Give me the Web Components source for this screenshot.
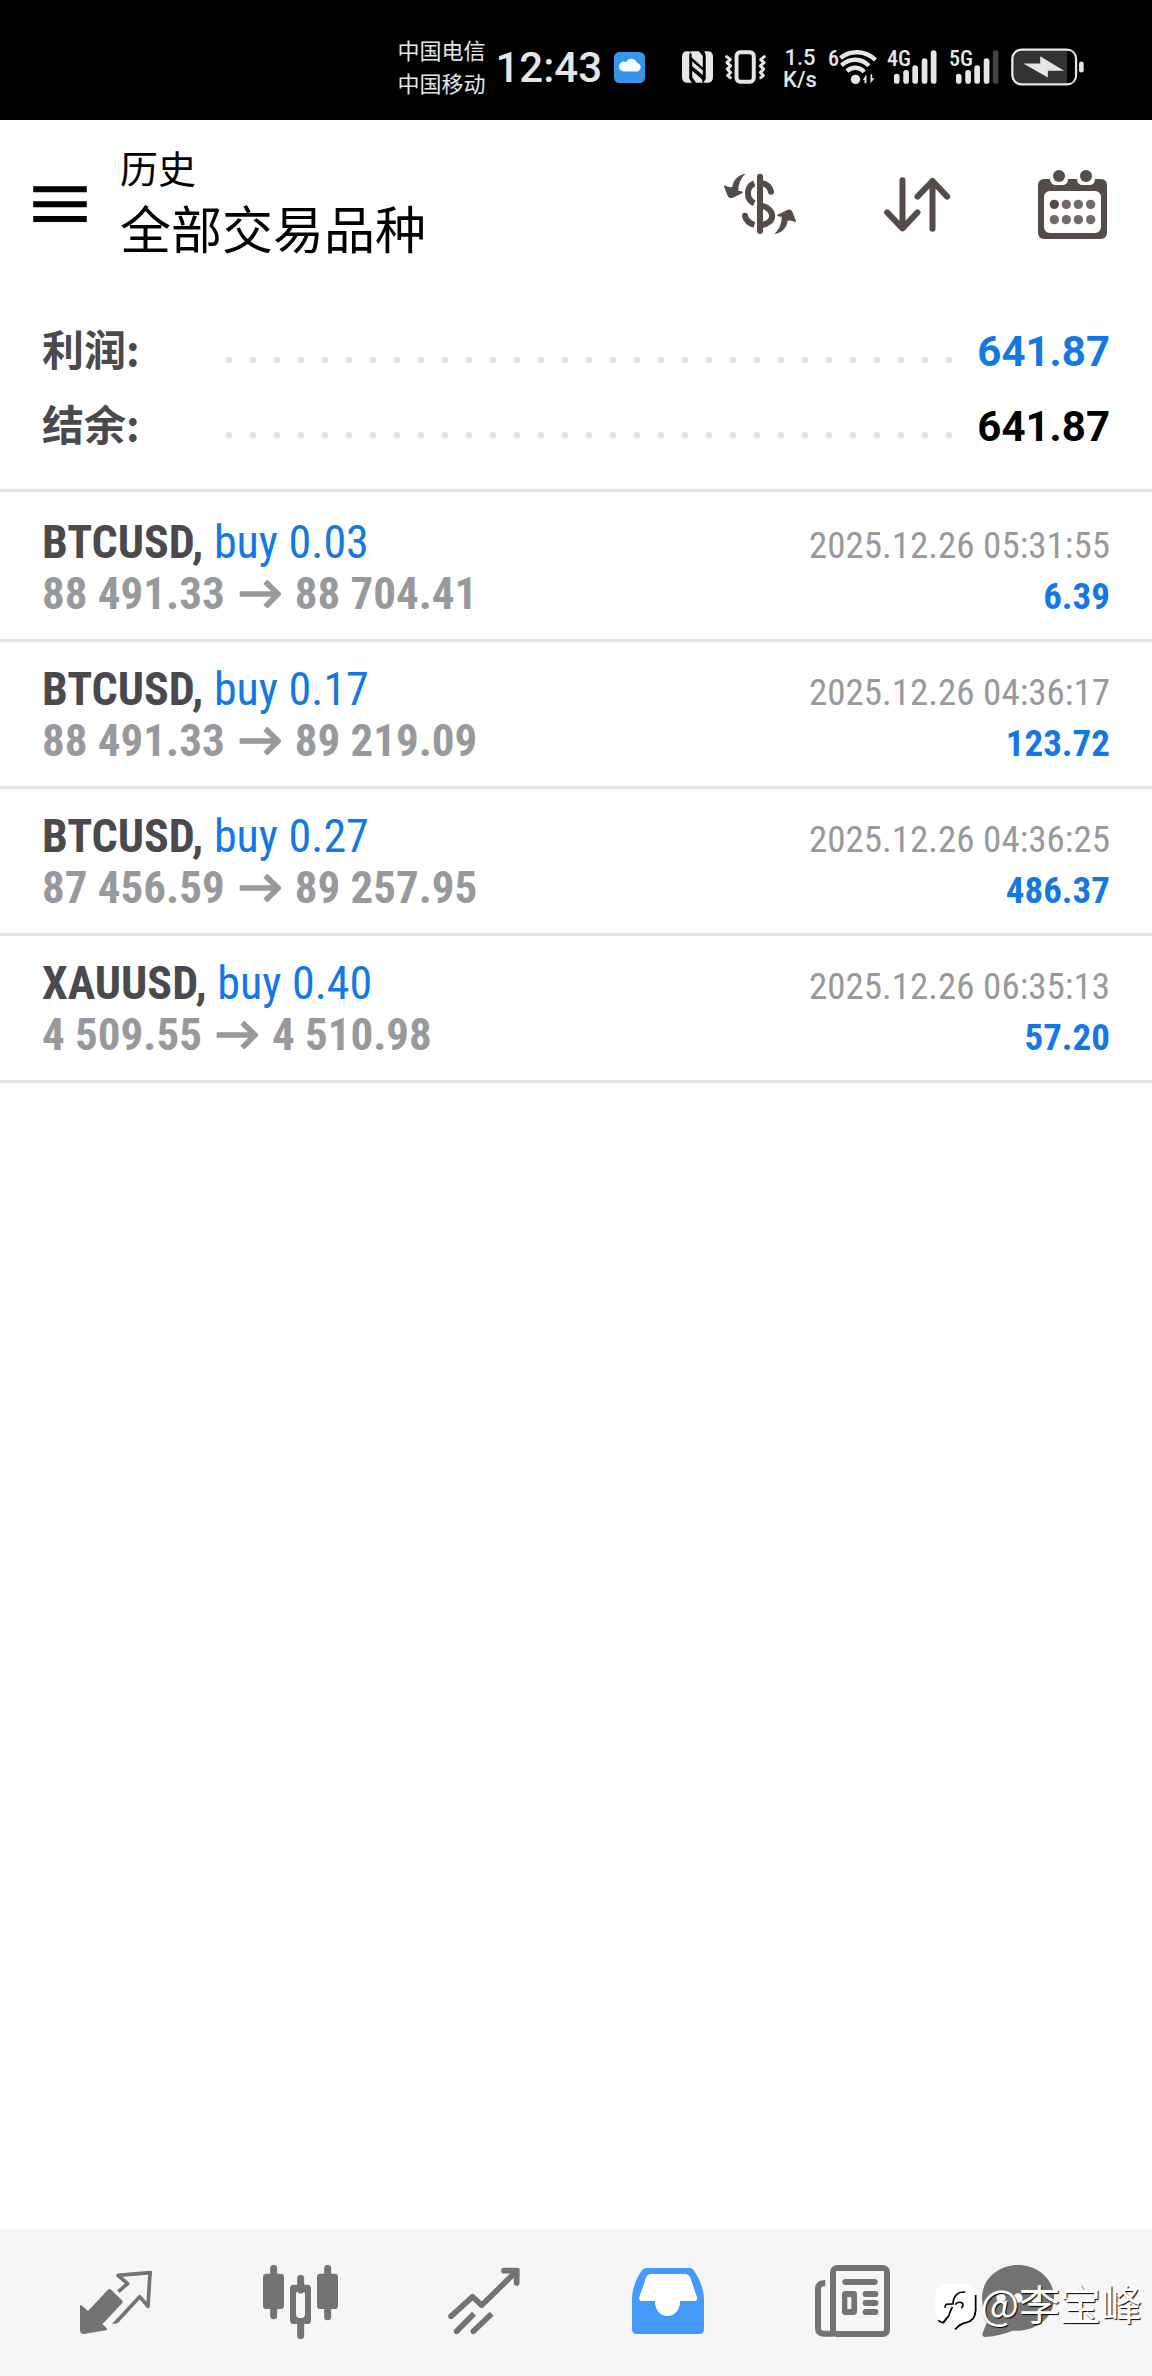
<!DOCTYPE html>
<html lang="zh-CN">
<head>
<meta charset="utf-8">
<meta name="viewport" content="width=device-width">
<title>历史</title>
<style>
html{height:100%}
body{margin:0;min-height:100%;background:#fff;font-family:Roboto,"Noto Sans CJK SC",sans-serif;color:#000;
--narrow:"Roboto Condensed","Liberation Sans Narrow",Roboto,sans-serif;--cjk:"Noto Sans CJK SC",sans-serif;
--blue:#1478e4;--ink:#4a494e;--muted:#98999c;--line:#e3e3e3}
</style>
</head>
<body>
<trade-app></trade-app>
<script>
const define=(name,html,setup)=>customElements.define(name,class extends HTMLElement{
  connectedCallback(){
    if(this.shadowRoot)return;
    this.attachShadow({mode:'open'}).innerHTML=typeof html==='function'?html(this):html;
    if(setup)setup(this);
  }
});
// Icon geometry is drawn on a grid three times finer than its display size.
const ICONS={
cloud:['701 98 94 94','<rect x="701" y="98" width="94" height="94" rx="16" fill="#3596ea"/><path d="M731 157a15 15 0 0 1 0-30q5 0 7 1a18 18 0 0 1 33 3 13 13 0 0 1-4 26z" fill="#f4fbff"/>'],
nfc:['65 95 94 95','<path d="M91 95H80Q65 95 65 112V172Q65 190 80 190H95L87 178V106zM86 95L116 95L128 109V144L94 113V103zM133 95H144Q159 95 159 112V172Q159 190 144 190H130L137 178V108zM96 126L128 153V167L96 140zM96 154L124 178L128 190H108L96 174z"/>'],
vibrate:['193 92 130 101','<rect x="231" y="98" width="52" height="89" rx="11" fill="none" stroke="currentColor" stroke-width="12"/><path d="M201 111l11 9-10 9 11 10-10 10 10 10-9 9 8 7M315 111l-11 9 10 9-11 10 10 10-10 10 9 9-8 7" fill="none" stroke="currentColor" stroke-width="9" stroke-linejoin="round" stroke-linecap="round"/>'],
wifi:['537 92 116 102','<circle cx="586" cy="180" r="14"/><path d="M541 116C570 92 615 92 646 122M544 138C570 114 605 117 626 139M560 155C576 141 599 142 612 158" fill="none" stroke="currentColor" stroke-width="13"/><path d="M608 182l11-17v27h-6v-10zM643 177l-12 15v-27h5v12z"/>'],
bars:['703 92 128 101','<g stroke="currentColor" stroke-width="17" stroke-linecap="round"><path d="M711 171V184M739 160V184M766 146V184M794 125V184"/><path class="last" d="M821 101V184"/></g>'],
battery:['1053 86 220 113','<rect x="1057" y="90" width="192" height="105" rx="28" fill="#333" stroke="currentColor" stroke-width="7"/><path d="M1222 94V191H1228Q1244 188 1245 170V116Q1244 97 1228 94z" fill="#000"/><path d="M1090 132H1141V110L1213 154H1164V174z"/><rect x="1258" y="126" width="14" height="33" rx="7"/>'],
menu:['99 197 162 109','<path d="M99 198h162v18H99zM99 243h162v18H99zM99 288h162v18H99z"/>'],
exchange:['105 99 222 186','<path d="M216 110V273" stroke="currentColor" stroke-width="18" stroke-linecap="round"/><g fill="none" stroke="currentColor" stroke-width="18"><path d="M199 130C174 141 173 178 199 190M216 128C235 130 245 139 249 155M216 195C266 207 263 251 216 256M171 228C174 241 184 250 199 255"/></g><circle cx="249" cy="155" r="9"/><circle cx="171" cy="227" r="9"/><path d="M171 101C148 106 135 122 133 141Q120 143 109 136Q106 138 110 145L119 168Q124 177 134 173L164 159Q166 155 160 154L151 152C151 132 159 115 171 103z"/><path d="M261 282C284 277 297 261 299 242Q312 240 323 247Q326 245 322 238L313 215Q308 206 298 210L268 224Q266 228 272 229L281 231C281 251 273 268 261 280z"/>'],
sort:['584 109 200 165','<path d="M639 119V262M593 215L639 263L684 215M729 264V121M684 168L729 121L773 168" fill="none" stroke="currentColor" stroke-width="18" stroke-linecap="round" stroke-linejoin="round"/>'],
calendar:['1044 84 207 207','<path fill-rule="evenodd" d="M1062 111H1080Q1082 129 1098 129H1116Q1134 129 1134 111H1161Q1162 129 1178 129H1197Q1214 129 1215 111H1233Q1251 113 1251 129V273Q1250 290 1233 291H1062Q1045 290 1044 273V129Q1045 112 1062 111zM1080 147Q1063 148 1062 165V255Q1063 272 1080 273H1215Q1232 272 1233 255V165Q1232 148 1215 147z"/><circle cx="1107" cy="102" r="18"/><circle cx="1188" cy="102" r="18"/><circle cx="1093" cy="187" r="14"/><g opacity=".82"><circle cx="1129" cy="187" r="14"/><circle cx="1165" cy="187" r="14"/><circle cx="1202" cy="187" r="14"/><circle cx="1093" cy="233" r="14"/><circle cx="1129" cy="233" r="14"/><circle cx="1165" cy="233" r="14"/><circle cx="1202" cy="233" r="14"/></g>'],
arrow:['714 233 126 84','<path d="M716 275H830M793 238L831 275L793 313" fill="none" stroke="currentColor" stroke-width="17"/>'],
quotes:['120 165 216 222','<path d="M120 287Q122 283 126 287L144 303L203 240Q208 234 214 240L246 271Q250 276 245 281L187 343L200 354Q203 359 198 361L132 372Q120 372 120 361z"/><path d="M235 245L263 221L234 196L330 188L324 289L299 260L229 336" fill="none" stroke="currentColor" stroke-width="11" stroke-linejoin="round"/><path d="M216 341H228L242 328L232 325z"/><path d="M320 183H336V198z"/>'],
candles:['666 165 225 222','<g stroke="currentColor" stroke-width="21" stroke-linecap="round"><path d="M698 175V317M779 205V240M779 335V377M860 175V320"/></g><rect x="666" y="191" width="63" height="106" rx="10"/><rect x="828" y="191" width="63" height="106" rx="10"/><path fill-rule="evenodd" d="M757 224H800Q810 225 810 235V332Q809 342 800 342H757Q747 341 747 332V235Q747 225 757 224zM774 242Q765 244 765 252V315Q766 323 774 324H783Q791 322 792 315V252Q791 243 783 242z"/>'],
trend:['1223 165 216 222','<g fill="none" stroke="currentColor" stroke-width="17" stroke-linejoin="round"><path d="M1232 319L1297 260L1324 286L1425 187M1249 364L1301 311M1299 364L1354 311"/><path d="M1391 182H1429V219" stroke-linecap="round"/></g><circle cx="1232" cy="319" r="8.5"/><circle cx="1249" cy="364" r="8.5"/><circle cx="1299" cy="364" r="8.5"/><path d="M1410 174H1437V200z"/>'],
inbox:['128 165 216 222','<path fill-rule="evenodd" d="M172 174H300Q309 174 315 184C333 211 344 239 344 270V359Q343 371 331 372H141Q129 371 128 359V266C129 236 140 207 156 183Q162 174 172 174zM187 192Q176 192 171 202L150 263Q149 272 158 273H197C198 333 271 333 272 273H315Q324 272 323 263L302 202Q297 193 287 192z"/><path fill="#fff" d="M187 192Q176 192 171 202L150 263Q149 272 158 273H197C198 333 271 333 272 273H315Q324 272 323 263L302 202Q297 193 287 192z"/>'],
news:['680 165 225 222','<g fill="none" stroke="currentColor" stroke-width="18"><rect x="734" y="174" width="162" height="198" rx="12"/><path d="M711 219Q689 219 689 238V354Q689 371 706 371H736"/></g><g stroke="currentColor" stroke-width="18" stroke-linecap="round"><path d="M771 216H859M832 252H861M832 279H861M832 306H861"/></g><path fill-rule="evenodd" d="M770 243H798Q806 244 806 252V307Q805 315 798 315H770Q761 314 761 307V252Q762 243 770 243zM777 261V297H789V261z"/>'],
chat:['246 165 216 222','<path d="M354 165C414 165 462 208 462 264C462 329 401 367 337 362Q303 377 256 381Q246 380 247 371L264 329Q246 302 246 264C246 208 294 165 354 165z"/><g fill="#f6f6f6"><circle cx="303" cy="264" r="14"/><circle cx="354" cy="264" r="14"/><circle cx="405" cy="264" r="14"/></g>'],
badge:['105 240 132 148','<path d="M230 276V322Q229 354 201 359Q184 362 168 380M118 352Q124 359 133 359L152 334" fill="none" stroke="#000" stroke-width="6"/><path fill="#fff" d="M137 243H198Q226 246 227 276V322Q226 353 198 357Q179 361 166 379L169 357L152 332L129 357Q109 348 109 322V276Q109 246 137 243z"/><path d="M199 268C179 264 163 278 162 303L142 304Q137 308 138 315M160 312L150 335M169 305C176 294 191 298 192 305Q192 312 187 316" fill="none" stroke="#000" stroke-width="5"/>']
};
define('app-icon',el=>{
  const [box,body]=ICONS[el.getAttribute('name')],[, ,w,h]=box.split(' ');
  return `<style>:host{display:block;flex:none}svg{display:block}:host([dim]) .last{stroke:#444}</style><svg aria-hidden="true" viewBox="${box}" width="${Math.round(w/3)}" height="${Math.round(h/3)}" fill="currentColor">${body}</svg>`;
});
define('signal-meter',`<style>
:host{display:block;position:relative;padding-left:7px;color:#e6e6e6}
span{position:absolute;left:0;top:-3px;font:500 22px/24px var(--narrow)}
</style><slot></slot><span></span>`,el=>{
  el.shadowRoot.querySelector('span').textContent=el.getAttribute('label');
});
define('status-bar',`<style>
:host{display:flex;align-items:center;justify-content:flex-end;height:120px;padding:14px 68px 0 0;box-sizing:border-box;background:#000;color:#e6e6e6;white-space:nowrap}
.carriers{font:22px/33px var(--cjk);margin-right:10px;padding-bottom:2px}
time{font:500 42px/48px Roboto,sans-serif;margin-right:12px;padding-top:2px}
.rate{font:500 22px/22px Roboto,sans-serif;text-align:center;width:36px;margin:0 10px 0 15px;padding-top:3px}
.nfc{margin:0 11px 0 37px}
.wifi{margin-right:9px;padding-left:11px}
.second{margin:0 12px}
</style>
<div class="carriers"><div>中国电信</div><div>中国移动</div></div>
<time>12:43</time><app-icon name="cloud"></app-icon>
<app-icon class="nfc" name="nfc"></app-icon><app-icon name="vibrate"></app-icon>
<div class="rate"><div>1.5</div><div>K/s</div></div>
<signal-meter class="wifi" label="6"><app-icon name="wifi"></app-icon></signal-meter>
<signal-meter label="4G"><app-icon name="bars"></app-icon></signal-meter>
<signal-meter class="second" label="5G"><app-icon name="bars" dim></app-icon></signal-meter>
<app-icon name="battery"></app-icon>`);
define('icon-button',el=>`<style>
:host{display:block}button{display:flex;align-items:center;justify-content:center;width:100%;border:0;background:none;padding:0;margin:0;color:inherit;cursor:pointer}
</style><button type="button" aria-label="${el.getAttribute('label')}"><app-icon name="${el.getAttribute('icon')}"></app-icon></button>`);
define('page-header',`<style>
:host{display:flex;align-items:center;padding:0 45px 0 33px;height:168px;box-sizing:border-box}
.title{flex:1;margin:0 0 0 33px;padding-bottom:8px;font-family:var(--cjk)}
p{margin:0;font-size:38px;line-height:54px}
h1{margin:0;font-size:51px;line-height:66px;font-weight:400}
.tools{display:flex;align-items:center;gap:87px;color:#554b48}
</style>
<icon-button icon="menu" label="菜单"></icon-button>
<div class="title"><p>历史</p><h1>全部交易品种</h1></div>
<div class="tools"><icon-button icon="exchange" label="交易品种"></icon-button><icon-button icon="sort" label="排序"></icon-button><icon-button icon="calendar" label="日期"></icon-button></div>`);
define('summary-row',`<style>
:host{display:flex;align-items:center;height:75px;color:#000}
dt{width:175px;flex:none;padding-bottom:8px;font:700 42px/60px var(--cjk);color:var(--ink)}
i{flex:1;height:8px;margin:16px 20px 0 0;background:radial-gradient(circle at 12px 4px,#e3e3e3 3px,transparent 4px) 0 0/24px 8px repeat-x}
dd{margin:0;font:700 42px/60px Roboto,sans-serif}
:host([gain]) dd{color:var(--blue)}
</style><dt><slot name="label"></slot></dt><i></i><dd><slot></slot></dd>`);
define('deal-row',el=>{const g=n=>el.getAttribute(n);return `<style>
:host{display:block;padding:22px 42px 20px;border-bottom:3px solid var(--line);font-family:var(--narrow)}
div{display:flex;justify-content:space-between;align-items:baseline;height:51px;line-height:51px;white-space:nowrap}
.name{font-size:46px;font-weight:700;color:var(--ink)}
.side{font-weight:400;color:var(--blue)}
.prices{font-size:45px;font-weight:700;color:var(--muted);display:inline-flex;align-items:baseline;gap:14px}
.time,.profit{font-size:37px}
.time{color:var(--muted)}.profit{font-weight:700;color:var(--blue)}
.prices app-icon{align-self:center}
</style>
<div><span class="name">${g('symbol')}, <span class="side">${g('side')}</span></span><time class="time">${g('time')}</time></div>
<div><span class="prices"><span>${g('open')}</span><app-icon name="arrow"></app-icon><span>${g('close')}</span></span><span class="profit">${g('profit')}</span></div>`});
define('tab-bar',`<style>
:host{display:block;position:relative;background:#f6f6f6}
nav{display:grid;grid-template-columns:repeat(5,184fr) 148fr;padding:36px 60px 37px 24px;color:#737373}
a{display:flex;justify-content:center;color:inherit}
a[aria-current]{color:#4499fa}
</style><nav>
<a href="#quotes" aria-label="行情"><app-icon name="quotes"></app-icon></a>
<a href="#charts" aria-label="图表"><app-icon name="candles"></app-icon></a>
<a href="#trade" aria-label="交易"><app-icon name="trend"></app-icon></a>
<a href="#history" aria-label="历史" aria-current="page"><app-icon name="inbox"></app-icon></a>
<a href="#news" aria-label="新闻"><app-icon name="news"></app-icon></a>
<a href="#chat" aria-label="聊天"><app-icon name="chat"></app-icon></a>
</nav><slot></slot>`);
define('author-mark',`<style>
:host{position:absolute;right:10px;bottom:34px;display:flex;align-items:center;gap:2px;color:#fff;font:41px/60px var(--cjk);text-shadow:1px 1px 1px #000}
span{padding-bottom:10px}
</style><app-icon name="badge"></app-icon><span><slot></slot></span>`);
define('trade-app',`<style>
:host{display:flex;flex-direction:column;min-height:100vh}
main{flex:1}
dl{margin:0;padding:26px 42px 25px;border-bottom:3px solid var(--line)}
.deals{padding-top:3px}
</style>
<status-bar></status-bar><page-header></page-header>
<main><dl>
<summary-row gain><span slot="label">利润:</span>641.87</summary-row>
<summary-row><span slot="label">结余:</span>641.87</summary-row></dl>
<div class="deals">
<deal-row symbol="BTCUSD" side="buy 0.03" time="2025.12.26 05:31:55" open="88 491.33" close="88 704.41" profit="6.39"></deal-row>
<deal-row symbol="BTCUSD" side="buy 0.17" time="2025.12.26 04:36:17" open="88 491.33" close="89 219.09" profit="123.72"></deal-row>
<deal-row symbol="BTCUSD" side="buy 0.27" time="2025.12.26 04:36:25" open="87 456.59" close="89 257.95" profit="486.37"></deal-row>
<deal-row symbol="XAUUSD" side="buy 0.40" time="2025.12.26 06:35:13" open="4 509.55" close="4 510.98" profit="57.20"></deal-row>
</div>
</main>
<tab-bar><author-mark>@李宝峰</author-mark></tab-bar>`);
</script>
</body>
</html>
